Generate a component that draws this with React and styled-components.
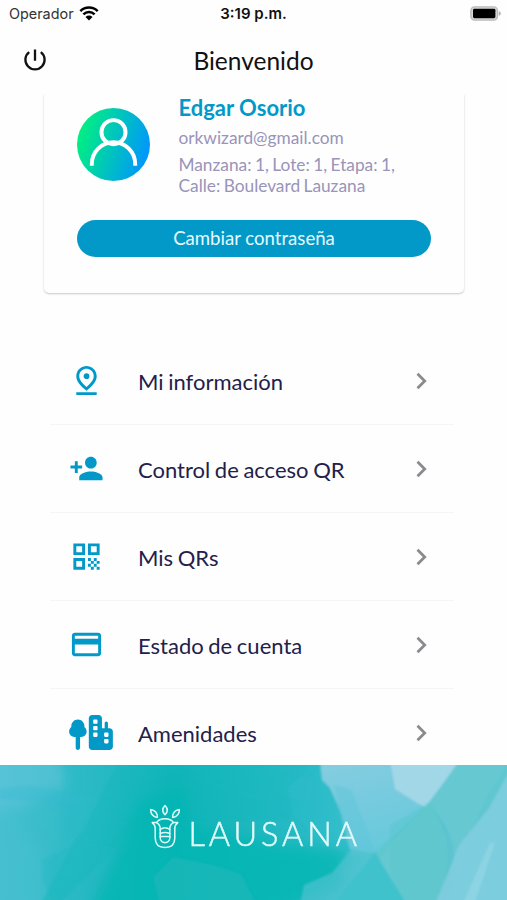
import React from "react";
import styled, { createGlobalStyle } from "styled-components";
import {
  MdOutlinePinDrop,
  MdPersonAdd,
  MdQrCode,
  MdCreditCard,
} from "react-icons/md";
import { FaTreeCity } from "react-icons/fa6";

const colors = {
  blue: "#0299c9",
  ink: "#23204a",
  muted: "#9894ba",
  line: "#f5f5f6",
  chevron: "#8b8b8f",
};

const menuItems = [
  { label: "Mi información", icon: MdOutlinePinDrop },
  { label: "Control de acceso QR", icon: MdPersonAdd },
  { label: "Mis QRs", icon: MdQrCode },
  { label: "Estado de cuenta", icon: MdCreditCard },
  { label: "Amenidades", icon: FaTreeCity, width: 44 },
];

const WifiIcon = () => (
  <svg width="20" height="15" viewBox="0 0 20 15">
    <g fill="none" stroke="#000" strokeWidth="2.5">
      <path d="M1.3 5.1a12.4 12.4 0 0 1 17.4 0" />
      <path d="M4.4 8.3a8 8 0 0 1 11.2 0" />
    </g>
    <path d="M10 14.4 6.5 10.9a5 5 0 0 1 7 0z" />
  </svg>
);

const BatteryIcon = () => (
  <svg width="31" height="15" viewBox="0 0 31 15">
    <rect x="0.9" y="0.9" width="26.6" height="13.2" rx="3.8" fill="#d8d8d8" stroke="#b9b9b9" strokeWidth="1.4" />
    <rect x="3" y="2.8" width="22.4" height="9.4" rx="1.4" />
    <path d="M28.8 5.2q2 .5 2 2.3t-2 2.3z" fill="#b0b0b0" />
  </svg>
);

const PowerIcon = () => (
  <svg width="24" height="24" viewBox="0 0 24 24" fill="none" stroke="#111" strokeWidth="2.3">
    <path d="M12 .4v11.400M6.200 3.200a9.600 9.600 0 1 0 11.600 0" />
  </svg>
);

const AvatarIcon = () => (
  <svg width="73" height="73" viewBox="0 0 74 74">
    <defs>
      <linearGradient id="avatar" x1="0" y1="0.35" x2="1" y2="0.65">
        <stop offset="0" stopColor="#00f27f" />
        <stop offset="1" stopColor="#0094ff" />
      </linearGradient>
    </defs>
    <circle cx="37" cy="37" r="37" fill="url(#avatar)" />
    <g fill="none" stroke="#fff" strokeWidth="4">
      <circle cx="37" cy="24.500" r="12.2" />
      <path d="M15 58.500v-1.700a22 22 0 0 1 44 0v1.700" />
    </g>
  </svg>
);

const ChevronIcon = () => (
  <svg width="12" height="18" viewBox="0 0 12 18" fill="none" stroke={colors.chevron} strokeWidth="2.8">
    <path d="m1.500 1.800 7.200 7.200-7.200 7.200" />
  </svg>
);

const FlowerIcon = () => (
  <svg
    width="32"
    height="45"
    viewBox="0 0 32 45"
    fill="none"
    stroke="#e2fbfa"
    strokeWidth="1.5"
    strokeLinejoin="round"
    strokeLinecap="round"
  >
    <path d="M16 1.500c3.100 3.200 3.100 6.200 0 9.300-3.100-3.100-3.100-6.100 0-9.300z" />
    <path d="M1.600 5.500c4.500.6 6.800 3.200 6.800 8-4.500-.7-6.800-3.300-6.800-8z" />
    <path d="M30.400 5.500c-4.500.6-6.800 3.200-6.800 8 4.500-.7 6.800-3.300 6.800-8z" />
    <path d="M7.500 18.600H3.200c2 1.500 3 3.300 3 6v9.400c0 6 3.500 9.500 9.800 9.500s9.800-3.500 9.800-9.500v-9.400c0-2.700 1-4.500 3-6h-4.300" />
    <path d="M7.500 18.600c3-5.200 14-5.200 17 0-2.500 1.400-3.700 3-3.700 5.700v9.500c0 6.500-9.600 6.500-9.600 0v-9.500c0-2.700-1.200-4.300-3.700-5.700z" />
    <path d="M11.200 25.500q4.800-3.600 9.600 0M11.200 29.500q4.800-2.200 9.600 0M11.200 32.600h9.600" />
  </svg>
);

// Overlapping washes of paint behind the footer logo
const Watercolor = () => (
  <svg width="100%" height="100%" viewBox="0 0 507 135" preserveAspectRatio="none">
    <defs>
      <linearGradient id="wash" x1="0" y1="0" x2="1" y2="0">
        <stop offset="0" stopColor="#48c0d2" />
        <stop offset="0.22" stopColor="#24b8c1" />
        <stop offset="0.34" stopColor="#12b5b8" />
        <stop offset="0.6" stopColor="#28bac5" />
        <stop offset="0.76" stopColor="#5bc6d2" />
        <stop offset="1" stopColor="#7fcbdc" />
      </linearGradient>
      <linearGradient id="teal" x1="0.8" y1="0" x2="0.2" y2="1">
        <stop offset="0" stopColor="#24b9c0" stopOpacity="0.2" />
        <stop offset="1" stopColor="#00b5b1" />
      </linearGradient>
      <linearGradient id="sky" x1="0" y1="0" x2="0.4" y2="1">
        <stop offset="0" stopColor="#86cde0" />
        <stop offset="1" stopColor="#66c9dc" />
      </linearGradient>
      <filter id="soft" x="-10%" y="-10%" width="120%" height="120%">
        <feGaussianBlur stdDeviation="1" />
      </filter>
      <filter id="softer" x="-20%" y="-20%" width="140%" height="140%">
        <feGaussianBlur stdDeviation="7" />
      </filter>
    </defs>
    <rect width="507" height="135" fill="url(#wash)" />
    <g filter="url(#softer)">
      <path d="M140 35l45-12 5 35 90 22 70 3-10 40-85 32H85l40-85z" fill="#00b5b1" opacity="0.75" />
      <path d="M-20-20h75l15 40-45 20-45 5z" fill="#66c6dc" opacity="0.5" />
      <path d="M-20 50l60 30 10 70h-70z" fill="#45bfce" opacity="0.6" />
    </g>
    <g filter="url(#soft)">
      <path d="M117-5h203l-12 40-20 20-95 0-50-5-30 35-55 55H40l45-85z" fill="url(#teal)" opacity="0.35" />
      <path d="M64-5h55L82 68l-22 20 3-55z" fill="#2cbbc9" opacity="0.35" />
      <path d="M0 24q30-6 63 3l40 8-34 3L0 34z" fill="#30b9d2" opacity="0.3" />
      <path d="M42 96l36-19 40 6-28 57H57l-14-23z" fill="#20b6c2" opacity="0.35" />
      <path d="M173 92l40 8 28 9 16 31H160l-7-27z" fill="#2ab9bd" opacity="0.45" />
      <path d="M288 22l32-27 20 35 12 58-28-6-30-32z" fill="#2bbccb" opacity="0.55" />
      <path d="M320-5h142l-32 42-56 51-24-4-8-34-12-27-8-8z" fill="url(#sky)" />
      <path d="M334 20l18 5 12 32 12 30-24 3-7-20z" fill="#5fc6da" opacity="0.5" />
      <path d="M390-5h70l-20 28-15 19-8-4-22-14z" fill="#a2d7e8" />
      <path d="M460-5h50v145H331l43-52 56-51z" fill="#5ec7cf" />
      <path d="M460-5h50l-21 33-40 84-14 28h-90l47-62 38-40z" fill="#74cbd5" opacity="0.4" />
      <path d="M390 60l40-23 15 25 3 50-16 28h-32l-10-38z" fill="#58c5cc" opacity="0.45" />
      <path d="M430 42c22 27 22 54 8 98h9c13-47 8-75-17-98z" fill="#4dbbcc" opacity="0.4" />
      <path d="M510 5l-21 38-30 37-24 60h75z" fill="#80cddf" opacity="0.9" />
      <path d="M490 78l-28 62h12l21-62z" fill="#9cdce8" opacity="0.5" />
      <path d="M375 87l-44 53h76z" fill="#38c1cc" opacity="0.8" />
      <path d="M350 86l24 2-43 52h-31l4-20 28-12z" fill="#52c3d1" opacity="0.65" />
    </g>
  </svg>
);

export const MenuItem = ({ item }) => {
  const Icon = item.icon;
  return (
    <Row>
      <RowIcon $width={item.width}>
        <Icon />
      </RowIcon>
      <RowLabel>{item.label}</RowLabel>
      <ChevronIcon />
    </Row>
  );
};

const App = () => {
  return (
    <Screen>
      <GlobalStyle />
      <StatusBar>
        <Carrier>
          Operador <WifiIcon />
        </Carrier>
        <Clock>3:19 p.m.</Clock>
        <Battery>
          <BatteryIcon />
        </Battery>
      </StatusBar>

      <Header>
        <PowerButton aria-label="Salir">
          <PowerIcon />
        </PowerButton>
        <Title>Bienvenido</Title>
      </Header>

      <Content>
        <Card>
          <Profile>
            <AvatarIcon />
            <ProfileInfo>
              <Name>Edgar Osorio</Name>
              <Email>orkwizard@gmail.com</Email>
              <Address>
                Manzana: 1, Lote: 1, Etapa: 1,
                <br />
                Calle: Boulevard Lauzana
              </Address>
            </ProfileInfo>
          </Profile>
          <PasswordButton>Cambiar contraseña</PasswordButton>
        </Card>

        <Menu>
          {menuItems.map((item) => (
            <MenuItem key={item.label} item={item} />
          ))}
        </Menu>
      </Content>

      <Footer>
        <Backdrop>
          <Watercolor />
        </Backdrop>
        <Brand>
          <FlowerIcon />
          <BrandName>LAUSANA</BrandName>
        </Brand>
      </Footer>
    </Screen>
  );
};

const GlobalStyle = createGlobalStyle`
  * {
    box-sizing: border-box;
  }

  body {
    margin: 0;
    background: #fefefe;
    font-family: Lato, sans-serif;
  }

  svg {
    display: block;
    flex-shrink: 0;
  }
`;

const Screen = styled.div`
  height: 900px;
  display: flex;
  flex-direction: column;
  overflow: hidden;
`;

const StatusBar = styled.div`
  height: 27px;
  padding: 0 6px 0 9px;
  display: grid;
  grid-template-columns: 1fr auto 1fr;
  align-items: center;
  font-family: Inter, sans-serif;
  font-size: 14px;
  flex-shrink: 0;
`;

const Carrier = styled.div`
  display: flex;
  align-items: center;
  gap: 5px;
  font-size: 14.4px;
  color: #333;
`;

const Clock = styled.div`
  padding-right: 3px;
  font-size: 15px;
  font-weight: 600;
  color: #111;
`;

const Battery = styled.div`
  display: flex;
  justify-content: flex-end;
`;

const Header = styled.div`
  height: 67px;
  padding: 0 23px;
  display: grid;
  grid-template-columns: 24px 1fr 24px;
  align-items: center;
  flex-shrink: 0;
`;

const PowerButton = styled.button`
  padding: 0;
  border: 0;
  background: none;
  cursor: pointer;
`;

const Title = styled.div`
  font-size: 24.5px;
  text-align: center;
  color: #111;
`;

const Content = styled.div`
  flex: 1;
  min-height: 0;
  overflow: hidden;
`;

const Card = styled.div`
  height: 199px;
  margin: 0 43px 0 44px;
  padding: 0 33px;
  border-radius: 0 0 5px 5px;
  background: #fefefe;
  box-shadow: 0 1px 2px rgba(0, 0, 0, 0.22);
`;

const Profile = styled.div`
  display: flex;
  padding-top: 14px;
  gap: 28.5px;
`;

const ProfileInfo = styled.div`
  margin-top: -14px;
  white-space: nowrap;
`;

const Name = styled.div`
  font-size: 22px;
  line-height: 28px;
  font-weight: 700;
  color: ${colors.blue};
`;

const Email = styled.div`
  margin-top: 5px;
  font-size: 17.3px;
  line-height: 21px;
  color: ${colors.muted};
`;

const Address = styled.div`
  margin-top: 6px;
  font-size: 17.3px;
  line-height: 21px;
  word-spacing: -1px;
  color: ${colors.muted};
`;

const PasswordButton = styled.button`
  display: block;
  width: 354px;
  height: 37px;
  margin-top: 23.5px;
  padding: 0;
  border: 0;
  border-radius: 19px;
  background: ${colors.blue};
  font-family: inherit;
  font-size: 18.6px;
  color: #e6f9ff;
  cursor: pointer;
`;

const Menu = styled.div`
  margin: 44px 53px 0 50px;
`;

const Row = styled.div`
  height: 88px;
  padding: 0 26px 0 14px;
  display: flex;
  align-items: center;
  border-bottom: 1px solid ${colors.line};
`;

const RowIcon = styled.div`
  width: 74px;
  padding-left: 5px;
  color: ${colors.blue};

  svg {
    width: ${(props) => props.$width || 35}px;
    height: 35px;
  }
`;

const RowLabel = styled.div`
  flex: 1;
  padding-top: 1px;
  font-size: 22px;
  word-spacing: -1px;
  color: ${colors.ink};
`;

const Footer = styled.div`
  height: 135px;
  display: grid;
  flex-shrink: 0;
`;

const Backdrop = styled.div`
  grid-area: 1 / 1;
  height: 135px;
`;

const Brand = styled.div`
  grid-area: 1 / 1;
  z-index: 1;
  display: flex;
  align-items: flex-start;
  padding: 39px 0 0 149px;
`;

const BrandName = styled.div`
  margin: 10px 0 0 7.5px;
  font-size: 32.5px;
  line-height: 40px;
  font-weight: 300;
  letter-spacing: 3.9px;
  color: #e2fbfa;
  -webkit-text-stroke: 0.5px #e2fbfa;
`;

export default App;
